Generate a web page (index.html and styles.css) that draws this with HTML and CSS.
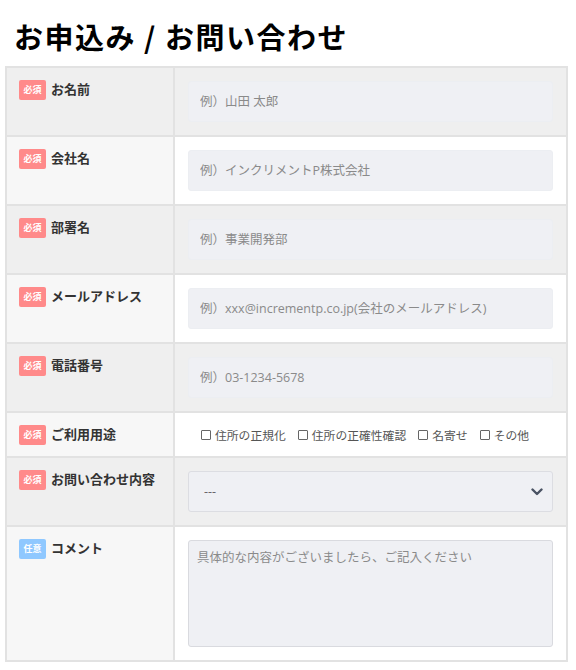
FILE: index.html
```
<!DOCTYPE html>
<html lang="ja">
<head>
  <meta charset="UTF-8" />
  <title>お申込み / お問い合わせ</title>
  <link rel="stylesheet" href="styles.css">
</head>

<body>
  <div class="page">
    <h1 class="page-title">お申込み / お問い合わせ</h1>

    <!-- form table -->
    <table class="form-table">
      <tr class="row-dark">
        <th><span class="badge badge-req">必須</span><span class="label">お名前</span></th>
        <td><input class="text-input" type="text" placeholder="例）山田 太郎"></td>
      </tr>
      <tr class="row-light">
        <th><span class="badge badge-req">必須</span><span class="label">会社名</span></th>
        <td><input class="text-input" type="text" placeholder="例）インクリメントP株式会社"></td>
      </tr>
      <tr class="row-dark">
        <th><span class="badge badge-req">必須</span><span class="label">部署名</span></th>
        <td><input class="text-input" type="text" placeholder="例）事業開発部"></td>
      </tr>
      <tr class="row-light">
        <th><span class="badge badge-req">必須</span><span class="label">メールアドレス</span></th>
        <td><input class="text-input" type="text" placeholder="例）xxx@incrementp.co.jp(会社のメールアドレス)"></td>
      </tr>
      <tr class="row-dark">
        <th><span class="badge badge-req">必須</span><span class="label">電話番号</span></th>
        <td><input class="text-input" type="text" placeholder="例）03-1234-5678"></td>
      </tr>
      <tr class="row-light">
        <th><span class="badge badge-req">必須</span><span class="label">ご利用用途</span></th>
        <td class="td-checks">
          <div class="checks">
            <label class="check"><input type="checkbox">住所の正規化</label>
            <label class="check"><input type="checkbox">住所の正確性確認</label>
            <label class="check"><input type="checkbox">名寄せ</label>
            <label class="check"><input type="checkbox">その他</label>
          </div>
        </td>
      </tr>
      <tr class="row-dark">
        <th><span class="badge badge-req">必須</span><span class="label">お問い合わせ内容</span></th>
        <td>
          <div class="select-wrap">
            <select class="select-input">
              <option>---</option>
            </select>
            <!-- chevron -->
            <svg class="select-arrow" width="12" height="8" viewBox="0 0 12 8">
              <path d="M1.5 1.5 L6 6 L10.5 1.5" fill="none" stroke="#4a5363" stroke-width="2.4" stroke-linecap="round" stroke-linejoin="round"/>
            </svg>
          </div>
        </td>
      </tr>
      <tr class="row-light">
        <th><span class="badge badge-opt">任意</span><span class="label">コメント</span></th>
        <td><textarea class="textarea-input" placeholder="具体的な内容がございましたら、ご記入ください"></textarea></td>
      </tr>
    </table>
  </div>
</body>
</html>
```

FILE: styles.css
```
body {
  margin: 0;
  padding: 0;
  background: #fff;
  font-family: "Open Sans", "Noto Sans CJK JP", sans-serif;
  color: #333;
}

.page {
  padding: 0 8px 0 5px;
}

.page-title {
  margin: 0;
  padding: 16px 0 10px 9px;
  font-family: "Noto Sans CJK JP", sans-serif;
  font-size: 29px;
  line-height: 40px;
  letter-spacing: 1.5px;
  font-weight: bold;
  color: #000;
}

/* table */
.form-table {
  width: 563px;
  border-collapse: collapse;
  border: 2px solid #e2e2e2;
}

.form-table th,
.form-table td {
  border: 2px solid #e2e2e2;
  vertical-align: top;
}

.form-table th {
  width: 146px;
  padding: 12px 8px 0 12px;
  text-align: left;
  font-weight: normal;
  white-space: nowrap;
}

.form-table td {
  padding: 13px;
}

.row-dark th,
.row-dark td {
  background-color: #efefef;
}
.row-light th {
  background-color: #f7f7f7;
}
.row-light td {
  background-color: #fff;
}

/* badges */
.badge {
  display: inline-block;
  width: 27px;
  height: 20px;
  line-height: 20px;
  border-radius: 2px;
  font-family: "Noto Sans CJK JP", sans-serif;
  font-size: 9px;
  font-weight: bold;
  color: #fff;
  text-align: center;
  vertical-align: top;
  margin-right: 5px;
}
.badge-req {
  background-color: #ff8a8a;
}
.badge-opt {
  background-color: #8fc8ff;
}

.label {
  display: inline-block;
  font-family: "Noto Sans CJK JP", sans-serif;
  font-size: 13px;
  font-weight: bold;
  line-height: 18px;
  color: #333;
  vertical-align: top;
}

/* inputs */
.text-input,
.select-input,
.textarea-input {
  display: block;
  box-sizing: border-box;
  width: 100%;
  margin: 0;
  border: 1px solid #eceef2;
  border-radius: 3px;
  background-color: #eff0f4;
  font-family: "Open Sans", "Noto Sans CJK JP", sans-serif;
  font-size: 12.5px;
  color: #333;
  outline: none;
}

.text-input {
  height: 41px;
  padding: 0 11px;
}

.text-input::placeholder,
.textarea-input::placeholder {
  color: #8a8a8a;
}

.select-wrap {
  position: relative;
}
.select-input {
  height: 41px;
  padding: 0 15px;
  border-color: #dcdde2;
  appearance: none;
  -webkit-appearance: none;
  color: #666;
}
.select-arrow {
  position: absolute;
  right: 10px;
  top: 17px;
  pointer-events: none;
}

.textarea-input {
  height: 107px;
  padding: 6px 8px;
  border-color: #d9dadf;
  resize: none;
}

/* checkboxes */
.td-checks {
  vertical-align: middle;
}
.form-table td.td-checks {
  padding: 13px 13px 12px 26px;
}
.checks {
  display: flex;
  gap: 12px;
  font-family: "Noto Sans CJK JP", sans-serif;
  font-size: 11.8px;
  line-height: 18px;
  color: #555;
}
.check {
  display: flex;
  align-items: center;
  white-space: nowrap;
}
.check input {
  appearance: none;
  -webkit-appearance: none;
  width: 10px;
  height: 10px;
  margin: 0 4px 0 0;
  border: 1px solid #666;
  border-radius: 1px;
  background: #fff;
}
```
